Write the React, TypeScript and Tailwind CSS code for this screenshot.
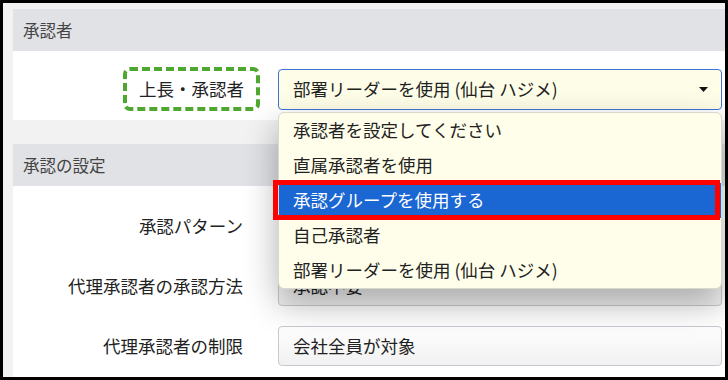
import React from "react";

const FONT = "font-['Noto_Sans_CJK_JP','Noto_Sans',sans-serif]";

function Row({ label, value, first }: { label: string; value: string; first?: boolean }) {
  return (
    <div className={`flex items-center h-[40px] ${first ? "" : "mt-[20px]"}`}>
      <div className="w-[247px] shrink-0 flex justify-end pr-[17px] text-[17.5px] text-[#222] leading-none">
        {label}
      </div>
      <div className="ml-[18px] mr-[3px] flex-1 h-[40px] rounded-[4px] border border-[#c6cbd1] bg-gradient-to-b from-white to-[#f1f1f1] flex items-center pl-[14px] text-[17.5px] text-[#222]">
        {value}
      </div>
    </div>
  );
}

export default function App() {
  const items = [
    "承認者を設定してください",
    "直属承認者を使用",
    "承認グループを使用する",
    "自己承認者",
    "部署リーダーを使用 (仙台 ハジメ)",
  ];
  return (
    <div
      className={`w-[728px] h-[380px] border-[3px] border-black bg-[#f2f2f2] pl-[10px] pt-[6px] overflow-hidden ${FONT}`}
    >
      {/* Section 1 */}
      <div>
        <div className="h-[42px] bg-[#e1e2e6] flex items-center pl-[10px] text-[16.5px] text-[#444]">
          承認者
        </div>
        <div className="bg-white pt-[16px] pb-[9px] h-[69px] flex items-center">
          <div className="w-[247px] shrink-0 flex justify-end">
            <div className="w-[137px] h-[44px] border-[4px] border-dashed border-[#4ea72e] rounded-[7px] flex items-center justify-center text-[17.5px] text-[#222] leading-none">
              上長・承認者
            </div>
          </div>
          <div className="ml-[18px] mr-[3px] flex-1 relative z-10">
            <div className="h-[41px] rounded-[4px] border border-[#3f73d4] bg-[#fefee8] flex items-center pl-[14px] pr-[12px] text-[17.5px] text-[#222]">
              <span className="flex-1">部署リーダーを使用 (仙台 ハジメ)</span>
              <svg width="9" height="5" viewBox="0 0 9 5" className="mr-[1px]">
                <path d="M0 0 L9 0 L4.5 5 Z" fill="#111" />
              </svg>
            </div>
            <div className="absolute left-0 right-0 top-[43px] rounded-[6px] border border-[#d8d8cc] bg-[#fffeea] shadow-[0_14px_34px_rgba(0,0,0,0.32)]">
              {items.map((t, i) =>
                i === 2 ? (
                  <div
                    key={t}
                    className="relative h-[35px] bg-[#1a66d2] flex items-center pl-[14px] text-[17.5px] text-white"
                  >
                    {t}
                    <div className="absolute -top-[3px] -bottom-[2px] -left-[6px] right-[1px] border-[5px] border-[#ff0000]" />
                  </div>
                ) : (
                  <div
                    key={t}
                    className="h-[35px] flex items-center pl-[14px] text-[17.5px] text-[#222]"
                  >
                    {t}
                  </div>
                )
              )}
            </div>
          </div>
        </div>
      </div>

      {/* Section 2 */}
      <div className="mt-[24px]">
        <div className="h-[42px] bg-[#e1e2e6] flex items-center pl-[10px] text-[16.5px] text-[#444]">
          承認の設定
        </div>
        <div className="bg-white pt-[20px] pb-[20px]">
          <Row label="承認パターン" value="" first />
          <Row label="代理承認者の承認方法" value="承認不要" />
          <Row label="代理承認者の制限" value="会社全員が対象" />
        </div>
      </div>
    </div>
  );
}
